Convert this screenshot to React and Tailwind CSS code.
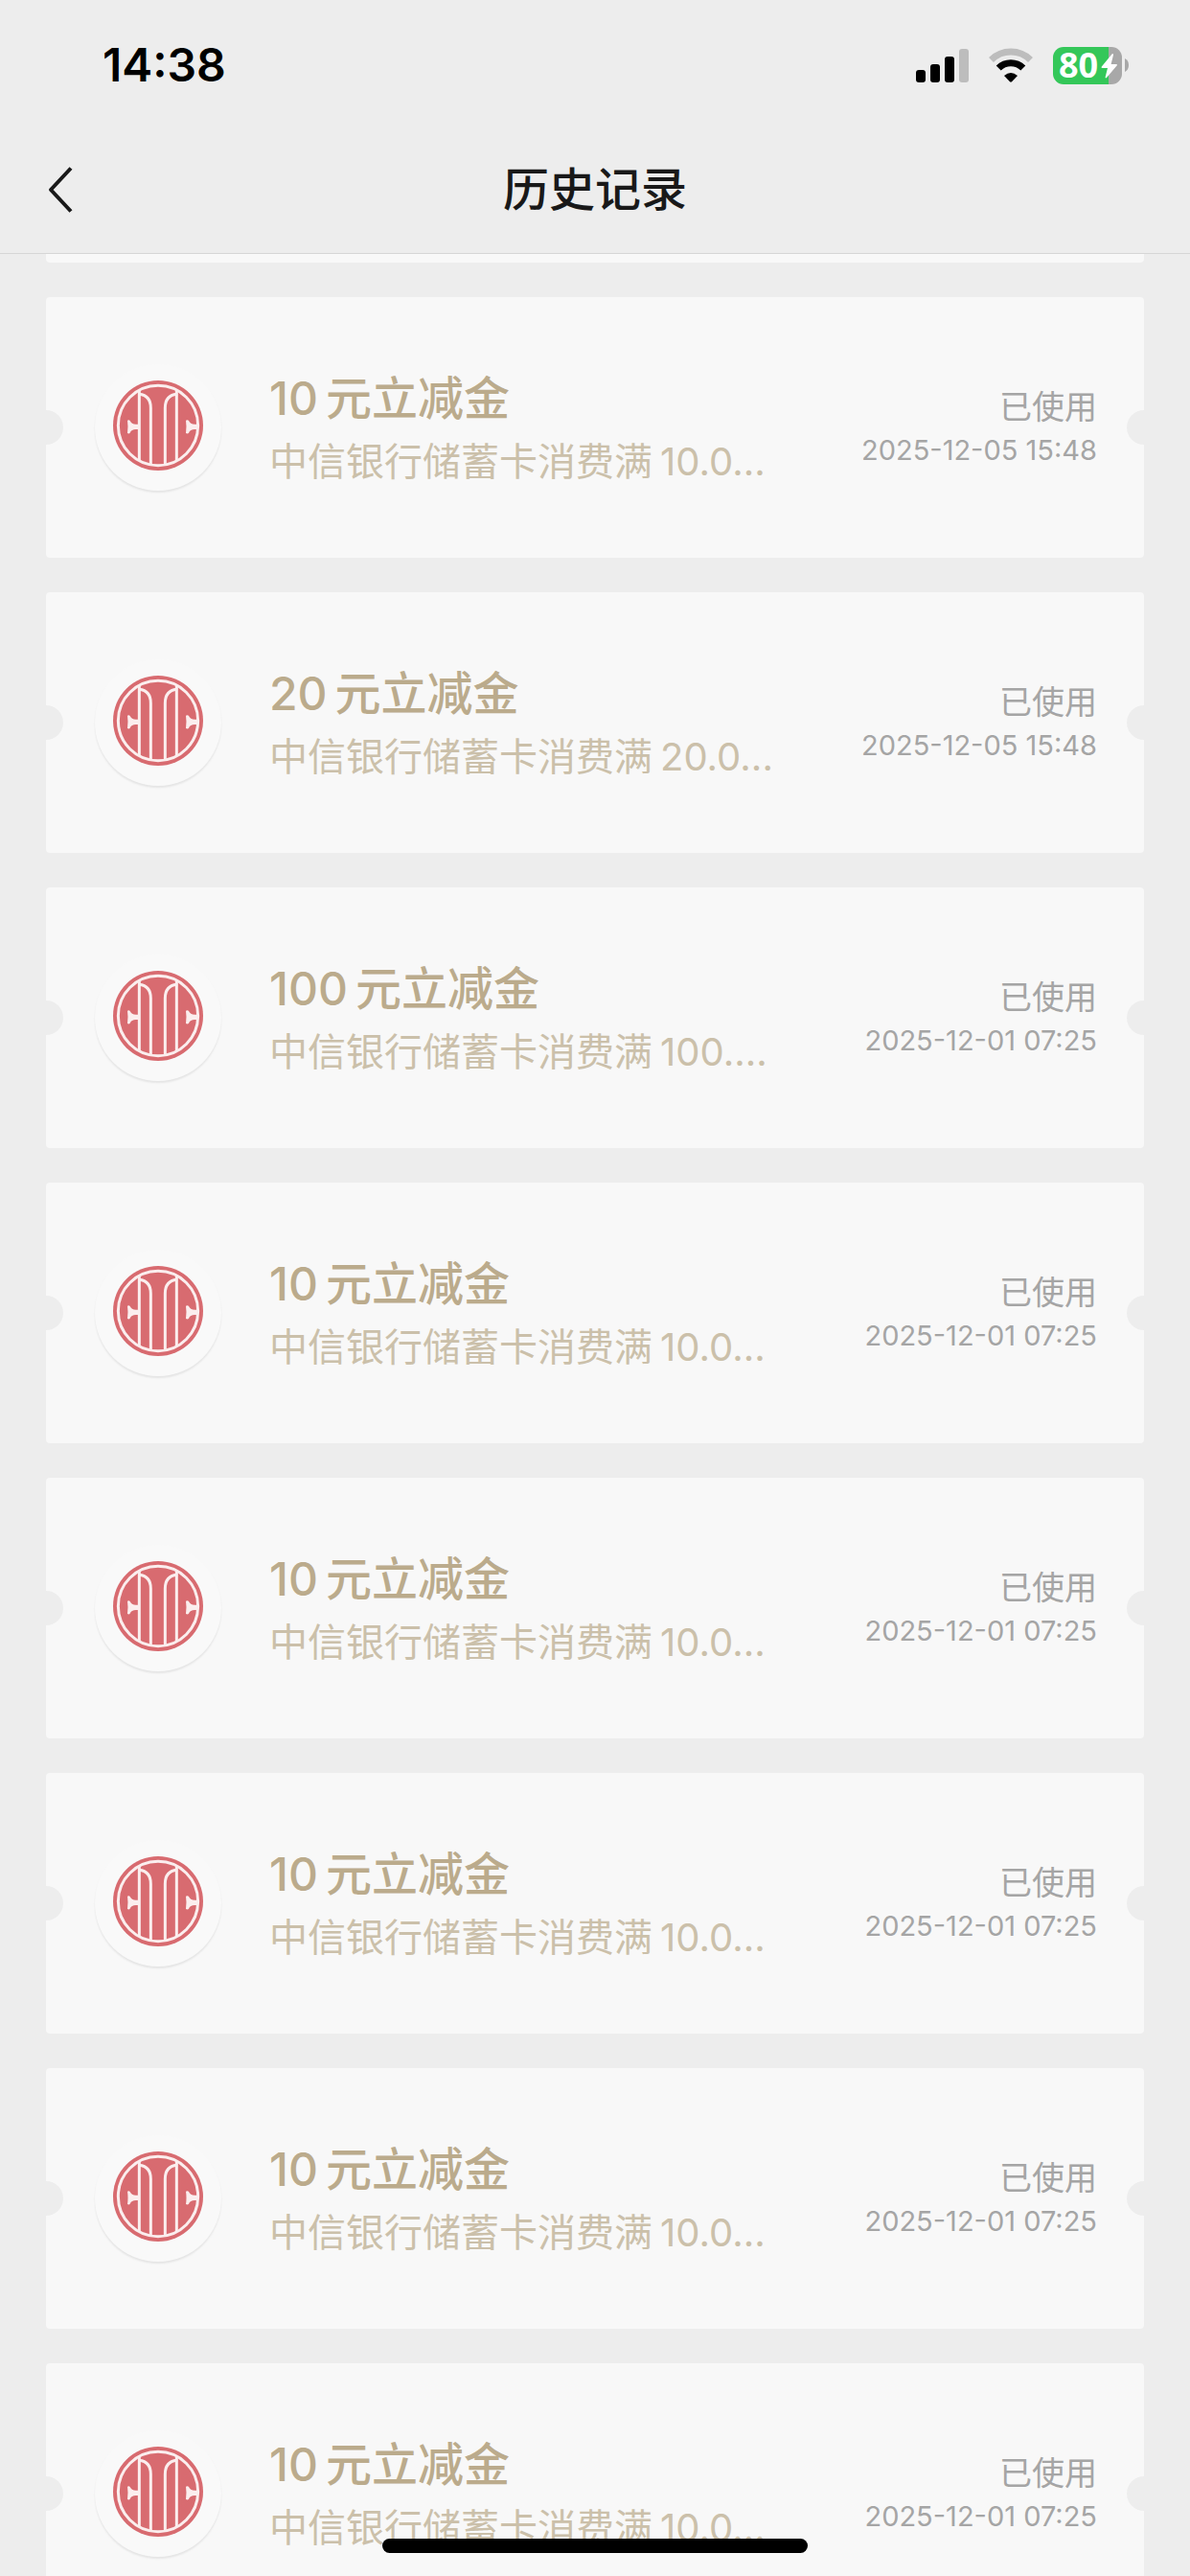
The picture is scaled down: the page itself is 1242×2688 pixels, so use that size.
const records = [
  { amount: '10', limit: '10.0...', time: '2025-12-05 15:48' },
  { amount: '20', limit: '20.0...', time: '2025-12-05 15:48' },
  { amount: '100', limit: '100....', time: '2025-12-01 07:25' },
  { amount: '10', limit: '10.0...', time: '2025-12-01 07:25' },
  { amount: '10', limit: '10.0...', time: '2025-12-01 07:25' },
  { amount: '10', limit: '10.0...', time: '2025-12-01 07:25' },
  { amount: '10', limit: '10.0...', time: '2025-12-01 07:25' },
  { amount: '10', limit: '10.0...', time: '2025-12-01 07:25' },
];

function SignalIcon() {
  return (
    <svg className="h-[35px] w-[55px]" viewBox="0 0 55 35" aria-hidden="true">
      <rect x="0" y="22" width="10" height="13" rx="3" />
      <rect x="15" y="16" width="10" height="19" rx="3" />
      <rect x="30" y="8" width="10" height="27" rx="3" />
      <rect x="45" y="0" width="10" height="35" rx="3" fill="#bdbdbd" />
    </svg>
  );
}

function WifiIcon() {
  return (
    <svg className="h-9 w-12" viewBox="0 0 48 36" fill="none" aria-hidden="true">
      <path d="M3.5 12.5 A29 29 0 0 1 44.5 12.5" stroke="#bdbdbd" strokeWidth="7" />
      <path d="M11.2 21 A18 18 0 0 1 36.8 21" stroke="#000" strokeWidth="7" />
      <path d="M17 29 Q24 23 31 29 L25 35.3 Q24 36.2 23 35.3 Z" fill="#000" />
    </svg>
  );
}

function BatteryIcon() {
  return (
    <div className="flex items-center gap-[3px]" role="img" aria-label="80%">
      <div className="relative flex h-[39px] w-[72px] items-center rounded-[11px] bg-[linear-gradient(to_right,#34c759_58px,#a8a8a8_58px)] pl-[6px]">
        <span className="font-['Open_Sans',sans-serif] text-[36px] leading-none font-bold text-white">80</span>
        <svg className="absolute top-[7px] right-[4px] h-[26px] w-[18px]" viewBox="0 0 18 26" aria-hidden="true">
          <path d="M11.5 0.5 L0.8 13.5 Q0 15 1.5 15 H7 L4.6 24.5 Q4.6 26 6 25 L16.6 12.5 Q17.6 11 16 11 H10.6 L13 1.2 Q12.8 -0.6 11.5 0.5 Z" fill="#fff" />
        </svg>
      </div>
      <svg className="h-[14px] w-1" viewBox="0 0 4 14" aria-hidden="true">
        <path d="M0 0 Q4 2 4 7 Q4 12 0 14 Z" fill="#a8a8a8" />
      </svg>
    </div>
  );
}

function BankLogo() {
  return (
    <svg className="size-[94px]" viewBox="0 0 282 282" aria-hidden="true">
      <circle cx="141" cy="141" r="141" fill="#d86b70" />
      <g fill="none" stroke="#fbeeee" strokeWidth="9">
        <circle cx="141" cy="141" r="125" />
        <path d="M82 32 V249" />
        <path d="M199 32 V249" />
        <path d="M82 43 C106 46 118 60 118 86 V263" />
        <path d="M199 43 C175 46 163 60 163 86 V263" />
      </g>
      <g fill="#fbeeee">
        <path d="M80 137 H72 C62 137 56 133 53 126 Q50 122 45 125 Q48 145 45 165 Q50 168 53 164 C56 157 62 153 72 153 H80 Z" />
        <path d="M264 137 H256 C246 137 240 133 237 126 Q234 122 228 125 Q231 145 228 165 Q234 168 237 164 C240 157 246 153 256 153 H264 Z" />
      </g>
    </svg>
  );
}

function RecordCard({ amount, limit, time }) {
  return (
    <li className="relative flex h-[272px] shrink-0 items-center overflow-hidden rounded bg-[#f8f8f8] pr-[49px] pl-[51px]">
      <span className="absolute top-1/2 left-0 size-9 -translate-x-1/2 -translate-y-1/2 rounded-full bg-[#ededed]" />
      <span className="absolute top-1/2 right-0 size-9 translate-x-1/2 -translate-y-1/2 rounded-full bg-[#ededed]" />
      <div className="flex size-[132px] shrink-0 items-center justify-center rounded-full bg-[#f9f9f9] pb-1 shadow-[0_2px_2px_rgba(0,0,0,0.08)]">
        <BankLogo />
      </div>
      <div className="ml-[50px] min-w-0 flex-1 whitespace-nowrap">
        <h2 className="flex gap-2 text-[48px] leading-[72px] font-medium text-[#bbab8c]">
          <span>{amount}</span>
          <span>元立减金</span>
        </h2>
        <p className="flex gap-2 text-[40px] leading-[60px] text-[#cbc0aa]">
          <span>中信银行储蓄卡消费满</span>
          <span>{limit}</span>
        </p>
      </div>
      <div className="shrink-0 text-right text-[#a5a5a5]">
        <p className="text-[34px] leading-[48px]">已使用</p>
        <time className="block text-[29px] leading-[42px]">{time}</time>
      </div>
    </li>
  );
}

export default function App() {
  return (
    <div className="flex h-screen flex-col overflow-hidden bg-[#ededed] font-['Inter','Noto_Sans_CJK_SC',sans-serif]">
      <header className="shrink-0 border-b border-[#d6d6d6]">
        <div className="flex h-[132px] items-center justify-between pt-1 pr-[64px] pl-[107px] text-black">
          <time className="text-[48px] leading-none font-semibold">14:38</time>
          <div className="flex items-center gap-5">
            <SignalIcon />
            <WifiIcon />
            <BatteryIcon />
          </div>
        </div>
        <nav className="grid h-[132px] grid-cols-[1fr_auto_1fr] items-center px-[49px] text-[#191919]">
          <button type="button" aria-label="返回" className="justify-self-start">
            <svg className="h-12 w-7" viewBox="0 0 28 48" fill="none" stroke="currentColor" strokeWidth="4" strokeLinejoin="round" aria-hidden="true">
              <path d="M25 1.5 L4 24 L25 46.5" />
            </svg>
          </button>
          <h1 className="text-[48px] leading-none font-medium">历史记录</h1>
        </nav>
      </header>
      <main className="min-h-0 flex-1 overflow-hidden px-12">
        <div className="h-[9px] rounded-b bg-[#f8f8f8]" />
        <ul className="mt-9 flex flex-col gap-9">
          {records.map((record, index) => (
            <RecordCard key={index} {...record} />
          ))}
        </ul>
      </main>
      <div className="fixed bottom-6 left-1/2 h-[15px] w-[444px] -translate-x-1/2 rounded-full bg-black" />
    </div>
  );
}
